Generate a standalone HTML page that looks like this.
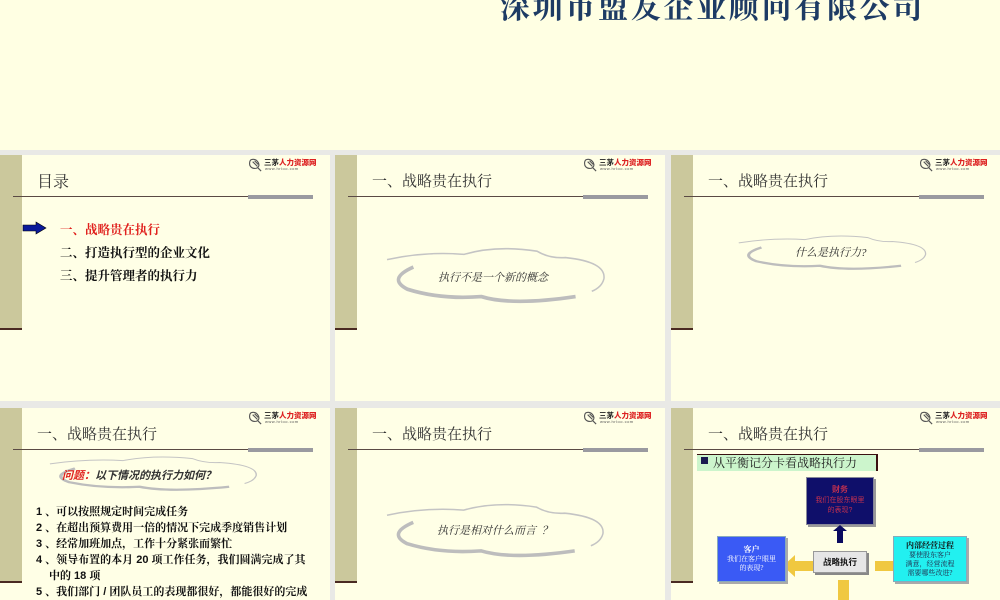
<!DOCTYPE html>
<html><head><meta charset="utf-8"><style>
*{margin:0;padding:0;box-sizing:border-box}
body{width:1000px;height:600px;overflow:hidden;background:#ffffe3;position:relative;font-family:"Liberation Sans","Noto Sans CJK SC",sans-serif}
.abs{position:absolute}
.top{left:0;top:0;width:1000px;height:150px;background:#ffffe3}
.co{left:500px;top:-17px;font-family:"Liberation Serif","Noto Serif CJK SC",serif;font-size:30px;font-weight:bold;color:#1d3b64;letter-spacing:2.7px;white-space:nowrap}
.gap{background:#e9e9e6}
.s{position:absolute;background:#ffffe6;overflow:hidden}
.band{position:absolute;left:0;top:0;width:22px;height:175px;background:#cbc89c;border-bottom:2px solid #4a2a22}
.hl{position:absolute;left:13px;top:41px;width:300px;height:1px;background:#5a4a44}
.gb{position:absolute;left:248px;top:40px;width:65px;height:4px;background:#9a9aa0}
.t{position:absolute;left:37px;top:15px;font-size:15px;color:#333;white-space:nowrap;font-family:"Liberation Serif","Noto Serif CJK SC",serif}
.logo{position:absolute;left:248px;top:2px;width:72px;height:16px}
.logo .a{position:absolute;left:16px;top:0;font-size:7.5px;font-weight:bold;color:#222;white-space:nowrap}
.logo .a b{color:#d22}
.logo .u{position:absolute;left:17px;top:9px;font-size:4px;color:#555;letter-spacing:.5px}
.cl{position:absolute}
.ct{position:absolute;font-style:italic;font-size:11px;color:#333;white-space:nowrap;font-family:"Liberation Serif","Noto Serif CJK SC",serif}
.li{position:absolute;font-size:12.5px;color:#111;white-space:nowrap;font-weight:bold;font-family:"Liberation Serif","Noto Serif CJK SC",serif}
.l4{position:absolute;font-size:11px;color:#111;white-space:nowrap;font-weight:bold;font-family:"Liberation Sans","Noto Serif CJK SC",serif}
</style></head><body>
<div class="abs top"></div>
<div class="abs co">深圳市盟友企业顾问有限公司</div>
<div class="abs gap" style="left:0;top:150px;width:1000px;height:5px"></div>
<div class="abs gap" style="left:0;top:401px;width:1000px;height:7px"></div>
<div class="abs gap" style="left:330px;top:150px;width:5px;height:450px"></div>
<div class="abs gap" style="left:665px;top:150px;width:6px;height:450px"></div>

<svg width="0" height="0" style="position:absolute"><defs>
<symbol id="cloud" viewBox="0 0 220 55"><path d="M2,12 Q40,4 78,7 Q110,-2 150,4 Q162,11 178,10 Q218,14 216,30 Q214,38 204,42" fill="none" stroke="#c4c4c4" stroke-width="1.5"/><path d="M28,19 Q2,30 22,40 Q55,50 95,47 Q125,56 188,47" fill="none" stroke="#bdbdbd" stroke-width="3.5"/></symbol>
<symbol id="lg" viewBox="0 0 16 16"><path d="M3,3 Q8,1 11,6 Q13,10 9,12 Q4,13 2,9 Q1,5 3,3 M5,5 L10,10 M7,4 L11,8 M10,11 L14,15" fill="none" stroke="#555" stroke-width="1.2"/></symbol>
</defs></svg>

<!-- slide 1 -->
<div class="s" style="left:0;top:155px;width:330px;height:246px">
<div class="band"></div><div class="hl"></div><div class="gb"></div>
<div class="logo"><svg width="15" height="15" style="position:absolute;left:0;top:0"><use href="#lg"/></svg><div class="a">三茅<b>人力资源网</b></div><div class="u">www.hrloo.com</div></div>
<div class="t" style="top:14px;font-size:16px">目录</div>
<svg class="abs" style="left:22px;top:66px" width="26" height="14"><path d="M1,4 H14 V1 L24,7 L14,13 V10 H1 Z" fill="#0a1a9a" stroke="#000" stroke-width=".6"/></svg>
<div class="li" style="left:60px;top:65px;color:#e0201c">一、战略贵在执行</div>
<div class="li" style="left:60px;top:88px">二、打造执行型的企业文化</div>
<div class="li" style="left:60px;top:111px">三、提升管理者的执行力</div>
</div>
<!-- slide 2 -->
<div class="s" style="left:335px;top:155px;width:330px;height:246px">
<div class="band"></div><div class="hl"></div><div class="gb"></div>
<div class="logo"><svg width="15" height="15" style="position:absolute;left:0;top:0"><use href="#lg"/></svg><div class="a">三茅<b>人力资源网</b></div><div class="u">www.hrloo.com</div></div>
<div class="t">一、战略贵在执行</div>
<svg class="cl" style="left:50px;top:92px" width="223" height="58" viewBox="0 0 220 55" preserveAspectRatio="none"><use href="#cloud"/></svg>
<div class="ct" style="left:103px;top:114px">执行不是一个新的概念</div>
</div>
<!-- slide 3 -->
<div class="s" style="left:671px;top:155px;width:329px;height:246px">
<div class="band"></div><div class="hl"></div><div class="gb"></div>
<div class="logo"><svg width="15" height="15" style="position:absolute;left:0;top:0"><use href="#lg"/></svg><div class="a">三茅<b>人力资源网</b></div><div class="u">www.hrloo.com</div></div>
<div class="t">一、战略贵在执行</div>
<svg class="cl" style="left:66px;top:80px" width="192" height="36" viewBox="0 0 220 55" preserveAspectRatio="none"><use href="#cloud"/></svg>
<div class="ct" style="left:124px;top:89px">什么是执行力?</div>
</div>
<!-- slide 4 -->
<div class="s" style="left:0;top:408px;width:330px;height:192px">
<div class="band"></div><div class="hl"></div><div class="gb"></div>
<div class="logo"><svg width="15" height="15" style="position:absolute;left:0;top:0"><use href="#lg"/></svg><div class="a">三茅<b>人力资源网</b></div><div class="u">www.hrloo.com</div></div>
<div class="t">一、战略贵在执行</div>
<svg class="cl" style="left:48px;top:48px" width="212" height="36" viewBox="0 0 220 55" preserveAspectRatio="none"><use href="#cloud"/></svg>
<div class="ct" style="left:62px;top:59px;font-weight:bold;font-family:'Liberation Sans','Noto Sans CJK SC',sans-serif;font-size:11px"><span style="color:#e0201c">问题：</span>以下情况的执行力如何？</div>
<div class="l4" style="left:36px;top:95px">1 、可以按照规定时间完成任务</div>
<div class="l4" style="left:36px;top:111px">2 、在超出预算费用一倍的情况下完成季度销售计划</div>
<div class="l4" style="left:36px;top:127px">3 、经常加班加点，工作十分紧张而繁忙</div>
<div class="l4" style="left:36px;top:143px">4 、领导布置的本月 20 项工作任务，我们圆满完成了其</div>
<div class="l4" style="left:49px;top:159px">中的 18 项</div>
<div class="l4" style="left:36px;top:175px">5 、我们部门 / 团队员工的表现都很好，都能很好的完成</div>
</div>
<!-- slide 5 -->
<div class="s" style="left:335px;top:408px;width:330px;height:192px">
<div class="band"></div><div class="hl"></div><div class="gb"></div>
<div class="logo"><svg width="15" height="15" style="position:absolute;left:0;top:0"><use href="#lg"/></svg><div class="a">三茅<b>人力资源网</b></div><div class="u">www.hrloo.com</div></div>
<div class="t">一、战略贵在执行</div>
<svg class="cl" style="left:50px;top:95px" width="222" height="56" viewBox="0 0 220 55" preserveAspectRatio="none"><use href="#cloud"/></svg>
<div class="ct" style="left:102px;top:114px">执行是相对什么而言 &nbsp;？</div>
</div>
<!-- slide 6 -->
<div class="s" style="left:671px;top:408px;width:329px;height:192px">
<div class="band"></div><div class="hl"></div><div class="gb"></div>
<div class="logo"><svg width="15" height="15" style="position:absolute;left:0;top:0"><use href="#lg"/></svg><div class="a">三茅<b>人力资源网</b></div><div class="u">www.hrloo.com</div></div>
<div class="t">一、战略贵在执行</div>
<div class="abs" style="left:26px;top:46px;width:181px;height:17px;background:#ccf5cc;border-right:2px solid #3a1010;border-top:1px solid #3a1010"></div>
<div class="abs" style="left:30px;top:49px;width:7px;height:7px;background:#1a1a50"></div>
<div class="abs" style="left:42px;top:46px;font-size:12px;color:#222;white-space:nowrap;font-family:'Liberation Serif','Noto Serif CJK SC',serif">从平衡记分卡看战略执行力</div>
<div class="abs" style="left:135px;top:69px;width:68px;height:48px;background:#0f0f6a;border:1px solid #889;box-shadow:2px 2px 0 #999;text-align:center;font-size:7px;color:#c03050;line-height:10px;padding-top:7px">
<b style="font-size:8px">财务</b><br>我们在股东眼里<br>的表现?</div>
<svg class="abs" style="left:162px;top:117px" width="14" height="18"><path d="M7,0 L14,6 H10 V18 H4 V6 H0 Z" fill="#0a0a60"/></svg>
<svg class="abs" style="left:112px;top:144px" width="122" height="48"><path d="M0,14 L12,3 V9 H30 V19 H12 V25 Z" fill="#f0c840"/><path d="M122,14 L110,3 V9 H92 V19 H110 V25 Z" fill="#f0c840"/><path d="M55,28 H66 V48 H55 Z" fill="#f0c840"/></svg>
<div class="abs" style="left:46px;top:128px;width:69px;height:46px;background:#3a5af5;border:1px solid #8ab;box-shadow:2px 2px 0 #aaa;text-align:center;font-size:7px;color:#fff;line-height:9px;padding-top:8px;font-family:'Liberation Serif','Noto Serif CJK SC',serif"><b style="font-size:8px">客户</b><br>我们在客户眼里<br>的表现?</div>
<div class="abs" style="left:142px;top:143px;width:54px;height:22px;background:#e6e6e6;border:1px solid #999;box-shadow:2px 2px 0 #888;text-align:center;font-size:8.5px;font-weight:bold;color:#111;line-height:20px">战略执行</div>
<div class="abs" style="left:222px;top:128px;width:74px;height:46px;background:#22f0f0;border:1px solid #8ab;box-shadow:2px 2px 0 #aaa;text-align:center;font-size:7px;color:#224;line-height:9px;padding-top:4px;font-family:'Liberation Serif','Noto Serif CJK SC',serif"><b style="font-size:8px;color:#111">内部经营过程</b><br>要使股东客户<br>满意，经营流程<br>需要哪些改进?</div>
</div>
</body></html>
